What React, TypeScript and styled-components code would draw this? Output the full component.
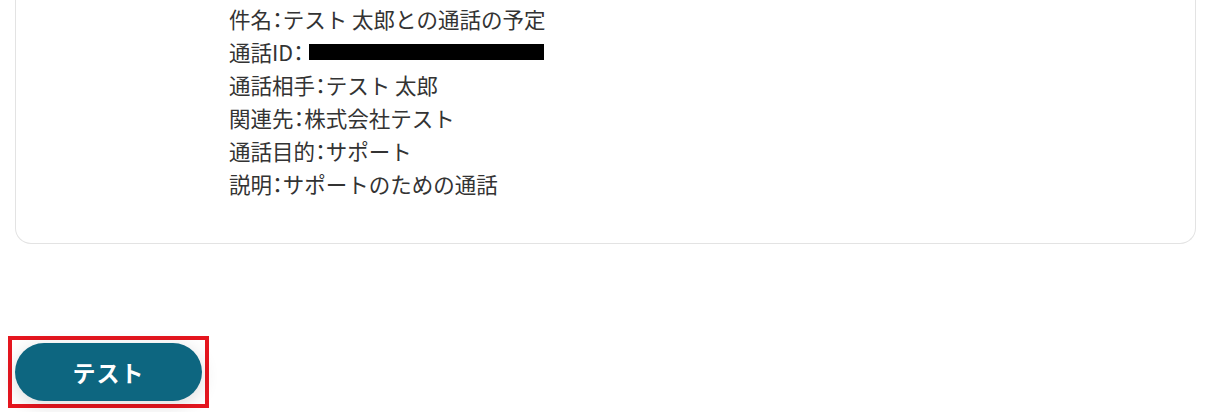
import styled, {createGlobalStyle} from "styled-components";

const GlobalStyle = createGlobalStyle`
  body {
    margin: 0;
    background: #ffffff;
    font-family: "Noto Sans CJK JP", "Noto Sans", sans-serif;
  }
`;

const Page = styled.div`
  width: 1207px;
  height: 412px;
  overflow: hidden;
`;

const Card = styled.div`
  margin: 0 11px 0 15px;
  padding: 2px 0 43px 213px;
  border: 1px solid #e3e3e3;
  border-top: none;
  border-radius: 0 0 16px 16px;
  background: #fff;
`;

const Line = styled.div`
  font-size: 21.5px;
  line-height: 33px;
  color: #333;
  white-space: nowrap;
  display: flex;
  align-items: center;
`;

// half-width colon as in the reference
const Colon = styled.span`
  font-feature-settings: "halt";
`;

const Redacted = styled.span`
  display: inline-block;
  width: 235px;
  height: 16px;
  background: #000;
  margin-left: 5px;
`;

const Highlight = styled.div`
  display: inline-flex;
  margin: 92px 0 0 8px;
  padding: 3px;
  border: 4px solid #e5161f;
`;

const TestButton = styled.button`
  width: 187px;
  height: 58px;
  border: none;
  border-radius: 29px;
  background: #0d6680;
  color: #fff;
  font-family: "Noto Sans CJK JP", "Noto Sans", sans-serif;
  font-size: 23px;
  font-weight: 700;
  letter-spacing: 1px;
  box-shadow: 0 4px 18px rgba(0, 0, 0, 0.14);
  cursor: pointer;
`;

const rows: [string, string][] = [
  ["件名", "テスト 太郎との通話の予定"],
  ["通話相手", "テスト 太郎"],
  ["関連先", "株式会社テスト"],
  ["通話目的", "サポート"],
  ["説明", "サポートのための通話"],
];

const Row = ({label, value}: {label: string; value: string}) => (
  <Line>
    {label}
    <Colon>：</Colon>
    {value}
  </Line>
);

export default function App() {
  return (
    <Page>
      <GlobalStyle />
      <Card>
        <Row label={rows[0][0]} value={rows[0][1]} />
        <Line>
          通話ID<Colon>：</Colon>
          <Redacted />
        </Line>
        {rows.slice(1).map(([l, v]) => (
          <Row key={l} label={l} value={v} />
        ))}
      </Card>
      <Highlight>
        <TestButton>テスト</TestButton>
      </Highlight>
    </Page>
  );
}
